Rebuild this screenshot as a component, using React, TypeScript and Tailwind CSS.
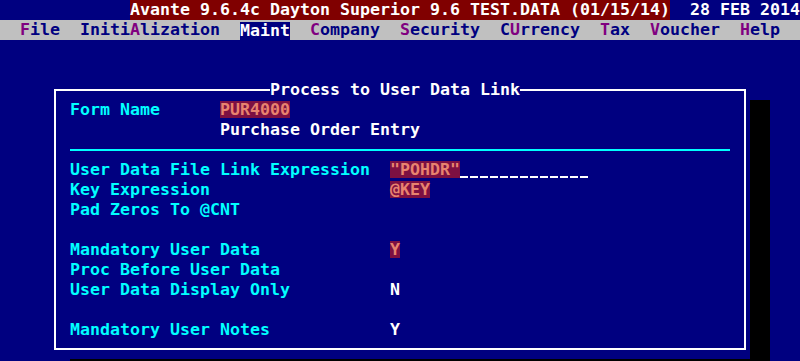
import type { ReactNode } from "react";

const menu = [
  { pre: "", key: "F", post: "ile" },
  { pre: "Initi", key: "A", post: "lization" },
  { pre: "Maint", key: "", post: "", active: true },
  { pre: "", key: "C", post: "ompany" },
  { pre: "", key: "S", post: "ecurity" },
  { pre: "C", key: "U", post: "rrency" },
  { pre: "", key: "T", post: "ax" },
  { pre: "", key: "V", post: "oucher" },
  { pre: "", key: "H", post: "elp" },
];

const Hi = ({ children }: { children: ReactNode }) => (
  <span className="mt-px inline-block h-[17px] bg-[#7d1042] align-top leading-[17px] text-[#e8846f]">
    {children}
  </span>
);

const Row = ({
  label,
  children,
  wide = true,
}: {
  label?: string;
  children?: ReactNode;
  wide?: boolean;
}) => (
  <div className="flex h-5 whitespace-pre leading-5">
    <span className={wide ? "w-[320px] text-[#00ffff]" : "w-[150px] text-[#00ffff]"}>{label}</span>
    {children}
  </div>
);

// empty input cells of the field, one short dash per character
const Blanks = ({ n }: { n: number }) => (
  <span className="flex">
    {Array.from({ length: n }, (_, i) => (
      <span key={i} className="mr-[2px] h-[18px] w-[8px] border-b-2 border-white" />
    ))}
  </span>
);

export default function App() {
  return (
    <div className="h-[361px] w-[800px] overflow-hidden bg-[#000080] font-['DejaVu_Sans_Mono',monospace] text-[16.61px] font-bold leading-5">
      {/* title line */}
      <div className="flex h-5 whitespace-pre text-white">
        <span className="ml-[130px] w-[540px] bg-[#800000]">
          Avante 9.6.4c Dayton Superior 9.6 TEST.DATA (01/15/14)
        </span>
        <span>{"  28 FEB 2014"}</span>
      </div>

      {/* menu bar */}
      <div className="flex h-5 gap-[20px] bg-[#c0c0c0] pl-[20px] whitespace-pre text-[#000080]">
        {menu.map((m) =>
          m.active ? (
            <span key={m.pre} className="mt-[2px] bg-[#000080] text-white leading-[18px]">
              {m.pre}
            </span>
          ) : (
            <span key={m.pre + m.key}>
              {m.pre}
              <span className="text-[#800080]">{m.key}</span>
              {m.post}
            </span>
          ),
        )}
      </div>

      <div className="h-10" />

      <div className="flex h-[279px]">
        <div className="relative mt-[9px] ml-[54px] h-[261px] w-[692px] border-2 border-white pt-[9px] pl-[14px]">
          <div className="absolute -top-[11px] left-[214px] h-5 bg-[#000080] whitespace-pre text-white">
            Process to User Data Link
          </div>

          <Row label="Form Name" wide={false}>
            <Hi>PUR4000</Hi>
          </Row>
          <Row wide={false}>
            <span className="text-white">Purchase Order Entry</span>
          </Row>
          <div className="h-5 pt-[9px]">
            <div className="h-[2px] w-[660px] bg-[#00ffff]" />
          </div>
          <Row label="User Data File Link Expression">
            <Hi>"POHDR"</Hi>
            <Blanks n={13} />
          </Row>
          <Row label="Key Expression">
            <Hi>@KEY</Hi>
          </Row>
          <Row label="Pad Zeros To @CNT" />
          <Row />
          <Row label="Mandatory User Data">
            <Hi>Y</Hi>
          </Row>
          <Row label="Proc Before User Data" />
          <Row label="User Data Display Only">
            <span className="text-white">N</span>
          </Row>
          <Row />
          <Row label="Mandatory User Notes">
            <span className="text-white">Y</span>
          </Row>
        </div>
        <div className="mt-[20px] ml-[4px] w-[20px] bg-black" />
      </div>
      <div className="ml-[70px] h-[2px] w-[700px] bg-black" />
    </div>
  );
}
